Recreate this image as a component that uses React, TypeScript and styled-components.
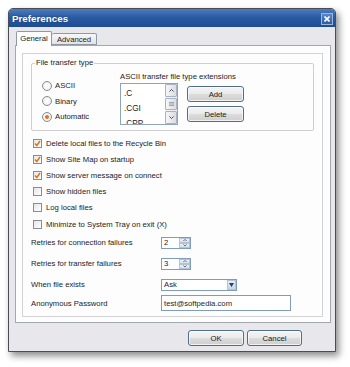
import React from "react";
import styled, { createGlobalStyle } from "styled-components";

const GlobalStyle = createGlobalStyle`
  html, body {
    margin: 0;
    padding: 0;
    background: #ffffff;
  }
  body {
    font-family: "Liberation Sans", Arial, sans-serif;
    font-size: 7.7px;
    color: #1c1c1c;
  }
`;

const Screen = styled.div`
  width: 350px;
  height: 367px;
  padding: 8px 0 0 8px;
  box-sizing: border-box;
`;

const Window = styled.div`
  width: 328px;
  height: 344px;
  box-sizing: border-box;
  border: 1px solid #4a4d52;
  border-radius: 5px 5px 0 0;
  background: #e8e8ec;
  box-shadow: 3px 4px 7px rgba(0, 0, 0, 0.45);
  display: flex;
  flex-direction: column;
  overflow: hidden;
`;

const TitleBar = styled.div`
  height: 18px;
  flex: none;
  display: flex;
  align-items: center;
  justify-content: space-between;
  padding: 1px 2px 0 3px;
  box-sizing: border-box;
  background: linear-gradient(#4d7cbf 0%, #2a5ba3 45%, #1e4c93 100%);
`;

const Title = styled.span`
  color: #ffffff;
  font-weight: bold;
  font-size: 9.8px;
  text-shadow: 0 0 2px rgba(0, 0, 0, 0.4);
`;

const CloseButton = styled.div`
  width: 12px;
  height: 12px;
  box-sizing: border-box;
  border: 1px solid #9db6d8;
  background: linear-gradient(#5a86c4, #2c5da4);
  display: flex;
  align-items: center;
  justify-content: center;
`;

const Body = styled.div`
  flex: 1;
  display: flex;
  flex-direction: column;
  padding: 4px 4px 0 6px;
`;

const TabRow = styled.div`
  height: 15px;
  display: flex;
  align-items: flex-end;
  padding-left: 1px;
  position: relative;
  z-index: 1;
  margin-bottom: -1px;
`;

const Tab = styled.div<{ $active?: boolean }>`
  box-sizing: border-box;
  height: ${(p) => (p.$active ? "15px" : "12px")};
  width: ${(p) => (p.$active ? "36px" : "45px")};
  margin-bottom: ${(p) => (p.$active ? "0" : "1px")};
  border: 1px solid #8d9aa3;
  border-bottom: ${(p) => (p.$active ? "none" : "1px solid #8d9aa3")};
  border-left: ${(p) => (p.$active ? "1px solid #8d9aa3" : "none")};
  border-radius: 2px 2px 0 0;
  background: ${(p) =>
    p.$active ? "#fdfdfd" : "linear-gradient(#f7f7f7, #e3e3e6)"};
  display: flex;
  align-items: center;
  justify-content: center;
  padding-bottom: ${(p) => (p.$active ? "2px" : "0")};
`;

const Panel = styled.div`
  height: 278px;
  box-sizing: border-box;
  border: 1px solid #a3a8ae;
  background: #fdfdfd;
  padding: 7px 7px 5px 6px;
`;

const Frame = styled.div`
  height: 264px;
  box-sizing: border-box;
  border: 1px solid #d3d3d6;
  padding: 9px 8px 0 8px;
  display: flex;
  flex-direction: column;
`;

const GroupBox = styled.div`
  position: relative;
  height: 68px;
  box-sizing: border-box;
  border: 1px solid #cfcfd2;
  border-radius: 2px;
  display: grid;
  grid-template-columns: 88px 1fr;
`;

const Legend = styled.span`
  position: absolute;
  left: 3px;
  top: -6px;
  padding: 0 1px;
  background: #fdfdfd;
  line-height: 10px;
`;

const RadioColumn = styled.div`
  padding: 14px 0 0 10px;
  display: flex;
  flex-direction: column;
`;

const OptionRow = styled.label<{ $height: number }>`
  height: ${(p) => p.$height}px;
  display: flex;
  align-items: center;
  gap: 3px;
`;

const RadioDot = styled.span<{ $on?: boolean }>`
  width: 10px;
  height: 10px;
  box-sizing: border-box;
  border-radius: 50%;
  border: 1px solid #8a8c8f;
  background: radial-gradient(circle, #ffffff 20%, #e4e4e6 100%);
  display: flex;
  align-items: center;
  justify-content: center;

  &::after {
    content: "";
    width: 4px;
    height: 4px;
    border-radius: 50%;
    background: ${(p) => (p.$on ? "#e8701a" : "transparent")};
  }
`;

const ExtColumn = styled.div`
  padding-top: 8px;
  display: flex;
  flex-direction: column;
`;

const ExtLabel = styled.div`
  height: 10px;
  line-height: 10px;
  margin-bottom: 1px;
`;

const ExtRow = styled.div`
  display: flex;
  align-items: flex-start;
`;

const ListBox = styled.div`
  width: 58px;
  height: 42px;
  box-sizing: border-box;
  border: 1px solid #8fa3bb;
  background: #ffffff;
  display: flex;
  overflow: hidden;
`;

const ListItems = styled.div`
  flex: 1;
  padding: 2px 0 0 3px;
  font-size: 8.2px;
`;

const ListItem = styled.div`
  height: 15px;
  line-height: 15px;
`;

const ScrollBar = styled.div`
  width: 12px;
  display: flex;
  flex-direction: column;
  gap: 1px;
  background: #eef0f3;
`;

const ScrollPart = styled.div<{ $grow?: boolean }>`
  flex: ${(p) => (p.$grow ? "1" : "none")};
  height: ${(p) => (p.$grow ? "auto" : "13px")};
  box-sizing: border-box;
  border: 1px solid #a9b4c2;
  border-radius: 1px;
  background: linear-gradient(90deg, #f6f6f8, #dcdde2);
  display: flex;
  align-items: center;
  justify-content: center;
`;

const ButtonStack = styled.div`
  margin: 3px 0 0 9px;
  display: flex;
  flex-direction: column;
  gap: 4px;
`;

const Button = styled.div<{ $width: number }>`
  width: ${(p) => p.$width}px;
  height: 16px;
  box-sizing: border-box;
  border: 1px solid #4e6d8f;
  border-radius: 3px;
  background: linear-gradient(#f4f4f4 0%, #ebebeb 48%, #dcdcdc 52%, #cfcfcf 100%);
  box-shadow: inset 0 0 0 1px rgba(255, 255, 255, 0.7);
  display: flex;
  align-items: center;
  justify-content: center;
`;

const CheckList = styled.div`
  margin-top: 4px;
  padding-left: 2px;
  display: flex;
  flex-direction: column;
`;

const CheckBox = styled.span`
  width: 9px;
  height: 9px;
  box-sizing: border-box;
  border: 1px solid #8a8c8f;
  background: linear-gradient(135deg, #e6e6e8, #ffffff);
  display: flex;
  align-items: center;
  justify-content: center;
  margin-right: 1px;
`;

const FieldRow = styled.div<{ $height: number }>`
  height: ${(p) => p.$height}px;
  display: flex;
  align-items: center;
`;

const FieldLabel = styled.span`
  width: 130px;
  flex: none;
`;

const Edit = styled.div<{ $width: number; $height: number }>`
  width: ${(p) => p.$width}px;
  height: ${(p) => p.$height}px;
  box-sizing: border-box;
  border: 1px solid #7f9db9;
  background: #ffffff;
  display: flex;
  align-items: center;
  padding-left: 2px;
`;

const EditText = styled.span`
  flex: 1;
`;

const SpinButtons = styled.div`
  width: 11px;
  height: 100%;
  display: flex;
  flex-direction: column;
`;

const SpinPart = styled.div`
  flex: 1;
  box-sizing: border-box;
  border: 1px solid #b4c3d6;
  background: linear-gradient(#eef2f7, #d6dee8);
  display: flex;
  align-items: center;
  justify-content: center;
`;

const DropButton = styled.div`
  width: 9px;
  height: 100%;
  box-sizing: border-box;
  border: 1px solid #b4c3d6;
  background: linear-gradient(#e6edf6, #c8d5e6);
  display: flex;
  align-items: center;
  justify-content: center;
`;

const Footer = styled.div`
  margin-top: 7px;
  padding-right: 29px;
  display: flex;
  justify-content: flex-end;
  gap: 3px;
`;

const Arrow = ({ dir, size = 5, color = "#4a4f57" }: { dir: "up" | "down"; size?: number; color?: string }) => (
  <svg width={size} height={size * 0.6} viewBox="0 0 10 6">
    {dir === "up" ? (
      <path d="M1 5 L5 1 L9 5" fill="none" stroke={color} strokeWidth="2" />
    ) : (
      <path d="M1 1 L5 5 L9 1" fill="none" stroke={color} strokeWidth="2" />
    )}
  </svg>
);

const Check = () => (
  <svg width="7" height="7" viewBox="0 0 7 7">
    <path d="M1 3.5 L2.8 5.5 L6 1" fill="none" stroke="#e2741d" strokeWidth="1.5" />
  </svg>
);

const checks = [
  { label: "Delete local files to the Recycle Bin", on: true },
  { label: "Show Site Map on startup", on: true },
  { label: "Show server message on connect", on: true },
  { label: "Show hidden files", on: false },
  { label: "Log local files", on: false },
  { label: "Minimize to System Tray on exit (X)", on: false },
];

function Spin({ value }: { value: string }) {
  return (
    <Edit $width={30} $height={12}>
      <EditText>{value}</EditText>
      <SpinButtons>
        <SpinPart>
          <Arrow dir="up" size={4} />
        </SpinPart>
        <SpinPart>
          <Arrow dir="down" size={4} />
        </SpinPart>
      </SpinButtons>
    </Edit>
  );
}

export default function App() {
  return (
    <Screen>
      <GlobalStyle />
      <Window>
        <TitleBar>
          <Title>Preferences</Title>
          <CloseButton>
            <svg width="6" height="6" viewBox="0 0 6 6">
              <path d="M0.5 0.5 L5.5 5.5 M5.5 0.5 L0.5 5.5" stroke="#ffffff" strokeWidth="1.6" />
            </svg>
          </CloseButton>
        </TitleBar>

        <Body>
          <TabRow>
            <Tab $active>General</Tab>
            <Tab>Advanced</Tab>
          </TabRow>

          <Panel>
            <Frame>
              <GroupBox>
                <Legend>File transfer type</Legend>
                <RadioColumn>
                  <OptionRow $height={15.5}>
                    <RadioDot />
                    ASCII
                  </OptionRow>
                  <OptionRow $height={15.5}>
                    <RadioDot />
                    Binary
                  </OptionRow>
                  <OptionRow $height={15.5}>
                    <RadioDot $on />
                    Automatic
                  </OptionRow>
                </RadioColumn>

                <ExtColumn>
                  <ExtLabel>ASCII transfer file type extensions</ExtLabel>
                  <ExtRow>
                    <ListBox>
                      <ListItems>
                        <ListItem>.C</ListItem>
                        <ListItem>.CGI</ListItem>
                        <ListItem>.CPP</ListItem>
                      </ListItems>
                      <ScrollBar>
                        <ScrollPart>
                          <Arrow dir="up" />
                        </ScrollPart>
                        <ScrollPart $grow>
                          <svg width="5" height="4" viewBox="0 0 5 4">
                            <path d="M0 0.5 H5 M0 2 H5 M0 3.5 H5" stroke="#8a929c" strokeWidth="0.8" />
                          </svg>
                        </ScrollPart>
                        <ScrollPart>
                          <Arrow dir="down" />
                        </ScrollPart>
                      </ScrollBar>
                    </ListBox>
                    <ButtonStack>
                      <Button $width={57}>Add</Button>
                      <Button $width={57}>Delete</Button>
                    </ButtonStack>
                  </ExtRow>
                </ExtColumn>
              </GroupBox>

              <CheckList>
                {checks.map((c) => (
                  <OptionRow key={c.label} $height={16.2}>
                    <CheckBox>{c.on && <Check />}</CheckBox>
                    {c.label}
                  </OptionRow>
                ))}
              </CheckList>

              <FieldRow $height={21}>
                <FieldLabel>Retries for connection failures</FieldLabel>
                <Spin value="2" />
              </FieldRow>
              <FieldRow $height={21}>
                <FieldLabel>Retries for transfer failures</FieldLabel>
                <Spin value="3" />
              </FieldRow>
              <FieldRow $height={21}>
                <FieldLabel>When file exists</FieldLabel>
                <Edit $width={76} $height={12}>
                  <EditText>Ask</EditText>
                  <DropButton>
                    <svg width="5" height="4" viewBox="0 0 10 8">
                      <path d="M0 0 H10 L5 8 Z" fill="#1f3f73" />
                    </svg>
                  </DropButton>
                </Edit>
              </FieldRow>
              <FieldRow $height={16}>
                <FieldLabel>Anonymous Password</FieldLabel>
                <Edit $width={130} $height={16}>
                  <EditText>test@softpedia.com</EditText>
                </Edit>
              </FieldRow>
            </Frame>
          </Panel>

          <Footer>
            <Button $width={56}>OK</Button>
            <Button $width={55}>Cancel</Button>
          </Footer>
        </Body>
      </Window>
    </Screen>
  );
}
